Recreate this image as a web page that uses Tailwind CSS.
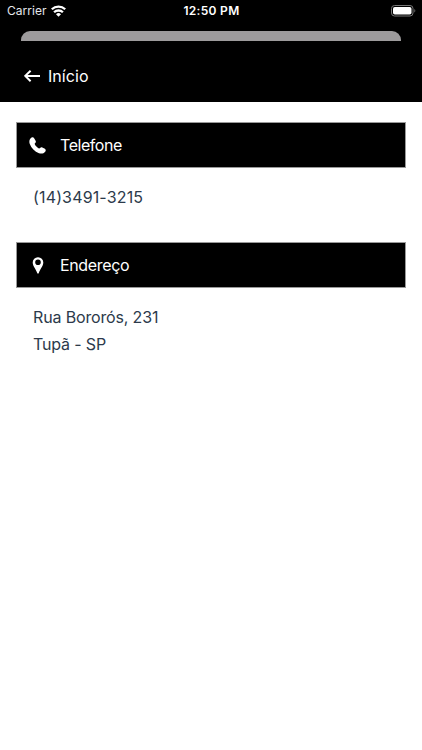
<!DOCTYPE html>
<html lang="pt-BR">

<head>
    <meta charset="UTF-8">
    <meta name="viewport" content="width=device-width, initial-scale=1.0">
    <title>Contato</title>
    <script src="https://cdn.jsdelivr.net/npm/@tailwindcss/browser@4"></script>
</head>

<body class="min-h-screen bg-white font-['Inter','Liberation_Sans',sans-serif] text-[#2c3a4b]">
    <!-- Header -->
    <header class="flex h-[102px] flex-col bg-black text-white">
        <!-- Status bar -->
        <div class="grid h-[22px] grid-cols-3 items-center pr-[6px] pl-[7px]">
            <div class="flex items-center gap-[5px]">
                <span class="text-[12px] leading-none tracking-[0.02px] text-gray-200">Carrier</span>
                <svg class="-mt-px h-[12px] w-[15px]" viewBox="0 0 15 12" fill="none" stroke="currentColor" stroke-width="2.3">
                    <path d="M0.8 4.300a9.600 9.600 0 0 1 13.400 0" />
                    <path d="M3.100 7.300a6.300 6.300 0 0 1 8.800 0" />
                    <path d="M7.500 11.800L5 9.300a3.500 3.500 0 0 1 5 0z" fill="currentColor" stroke="none" />
                </svg>
            </div>
            <span class="text-center text-[12px] leading-none font-semibold tracking-[0.3px]">12:50 PM</span>
            <svg class="h-[12px] w-[25px] justify-self-end" viewBox="0 0 25 12">
                <rect x="0.5" y="0.5" width="21.5" height="10.5" rx="3" fill="none" stroke="#777" />
                <rect x="2" y="2" width="18.5" height="7.5" rx="1.8" fill="#fff" />
                <path d="M23.4 4v3.6c1.2-.6 1.2-3 0-3.6z" fill="#777" />
            </svg>
        </div>

        <!-- Sheet behind the modal -->
        <div class="mx-[21px] mt-[9px] h-[10px] rounded-t-[9px] bg-[#9d9b9c]"></div>

        <!-- Back button -->
        <a href="#" class="mt-[23px] ml-[24px] flex h-6 items-center gap-[8px]">
            <svg class="h-[12px] w-[16px]" viewBox="0 0 16 12" fill="none" stroke="currentColor" stroke-width="2">
                <path d="M16 5.900H1.400M6.600 0.700L1.300 5.900l5.300 5.300" />
            </svg>
            <span class="text-[16px] leading-6 tracking-[0.05px]">Início</span>
        </a>
    </header>

    <!-- Main Content -->
    <main class="px-4 pt-5">
        <!-- Phone -->
        <section class="h-[120px]">
            <div class="flex h-[46px] w-[390px] items-center border border-[#999] bg-black pl-[12px] text-white">
                <svg class="h-[17px] w-[17px]" viewBox="0 0 17 17" fill="currentColor">
                    <path d="M2.300.8C3.400 0 4.600.3 5.300 1.500L6.600 3.700C7.100 4.600 6.900 5.300 6.200 5.900C5.600 6.500 5.500 6.900 5.900 7.600C6.800 9.200 8 10.400 9.600 11.300C10.200 11.600 10.600 11.500 11.100 11C11.700 10.300 12.400 10.100 13.300 10.500L15.900 11.700C16.900 12.300 17 13.600 16.200 14.700C14.700 16.700 12.300 17 10 16.200C5.700 14.600 2.300 11.200.8 7C-.1 4.600.3 2.300 2.300.8Z" />
                </svg>
                <h2 class="ml-[14px] text-[16px] tracking-[-0.45px]">Telefone</h2>
            </div>
            <p class="mt-[16px] pl-[17px] text-[16px] leading-[27px] tracking-[0.15px]">(14)3491-3215</p>
        </section>

        <!-- Address -->
        <section>
            <div class="flex h-[46px] w-[390px] items-center border border-[#999] bg-black pl-[12px] text-white">
                <svg class="h-[17px] w-[17px]" viewBox="0 0 17 17" fill="currentColor" fill-rule="evenodd">
                    <path d="M9 .2a5.200 5.200 0 0 0-5.300 5.300C3.700 9 7.200 12.500 8.200 16Q9 17.400 9.800 16C10.800 12.500 14.300 9 14.300 5.500A5.200 5.200 0 0 0 9 .2ZM9 2.500a2.800 2.800 0 1 1 0 5.600a2.800 2.800 0 0 1 0-5.600Z" />
                </svg>
                <h2 class="ml-[14px] text-[16px] tracking-[-0.35px]">Endereço</h2>
            </div>
            <p class="mt-[16px] pl-[17px] text-[16px] leading-[26.5px] tracking-[-0.15px]">Rua Bororós, 231<br>Tupã - SP</p>
        </section>
    </main>
</body>

</html>
